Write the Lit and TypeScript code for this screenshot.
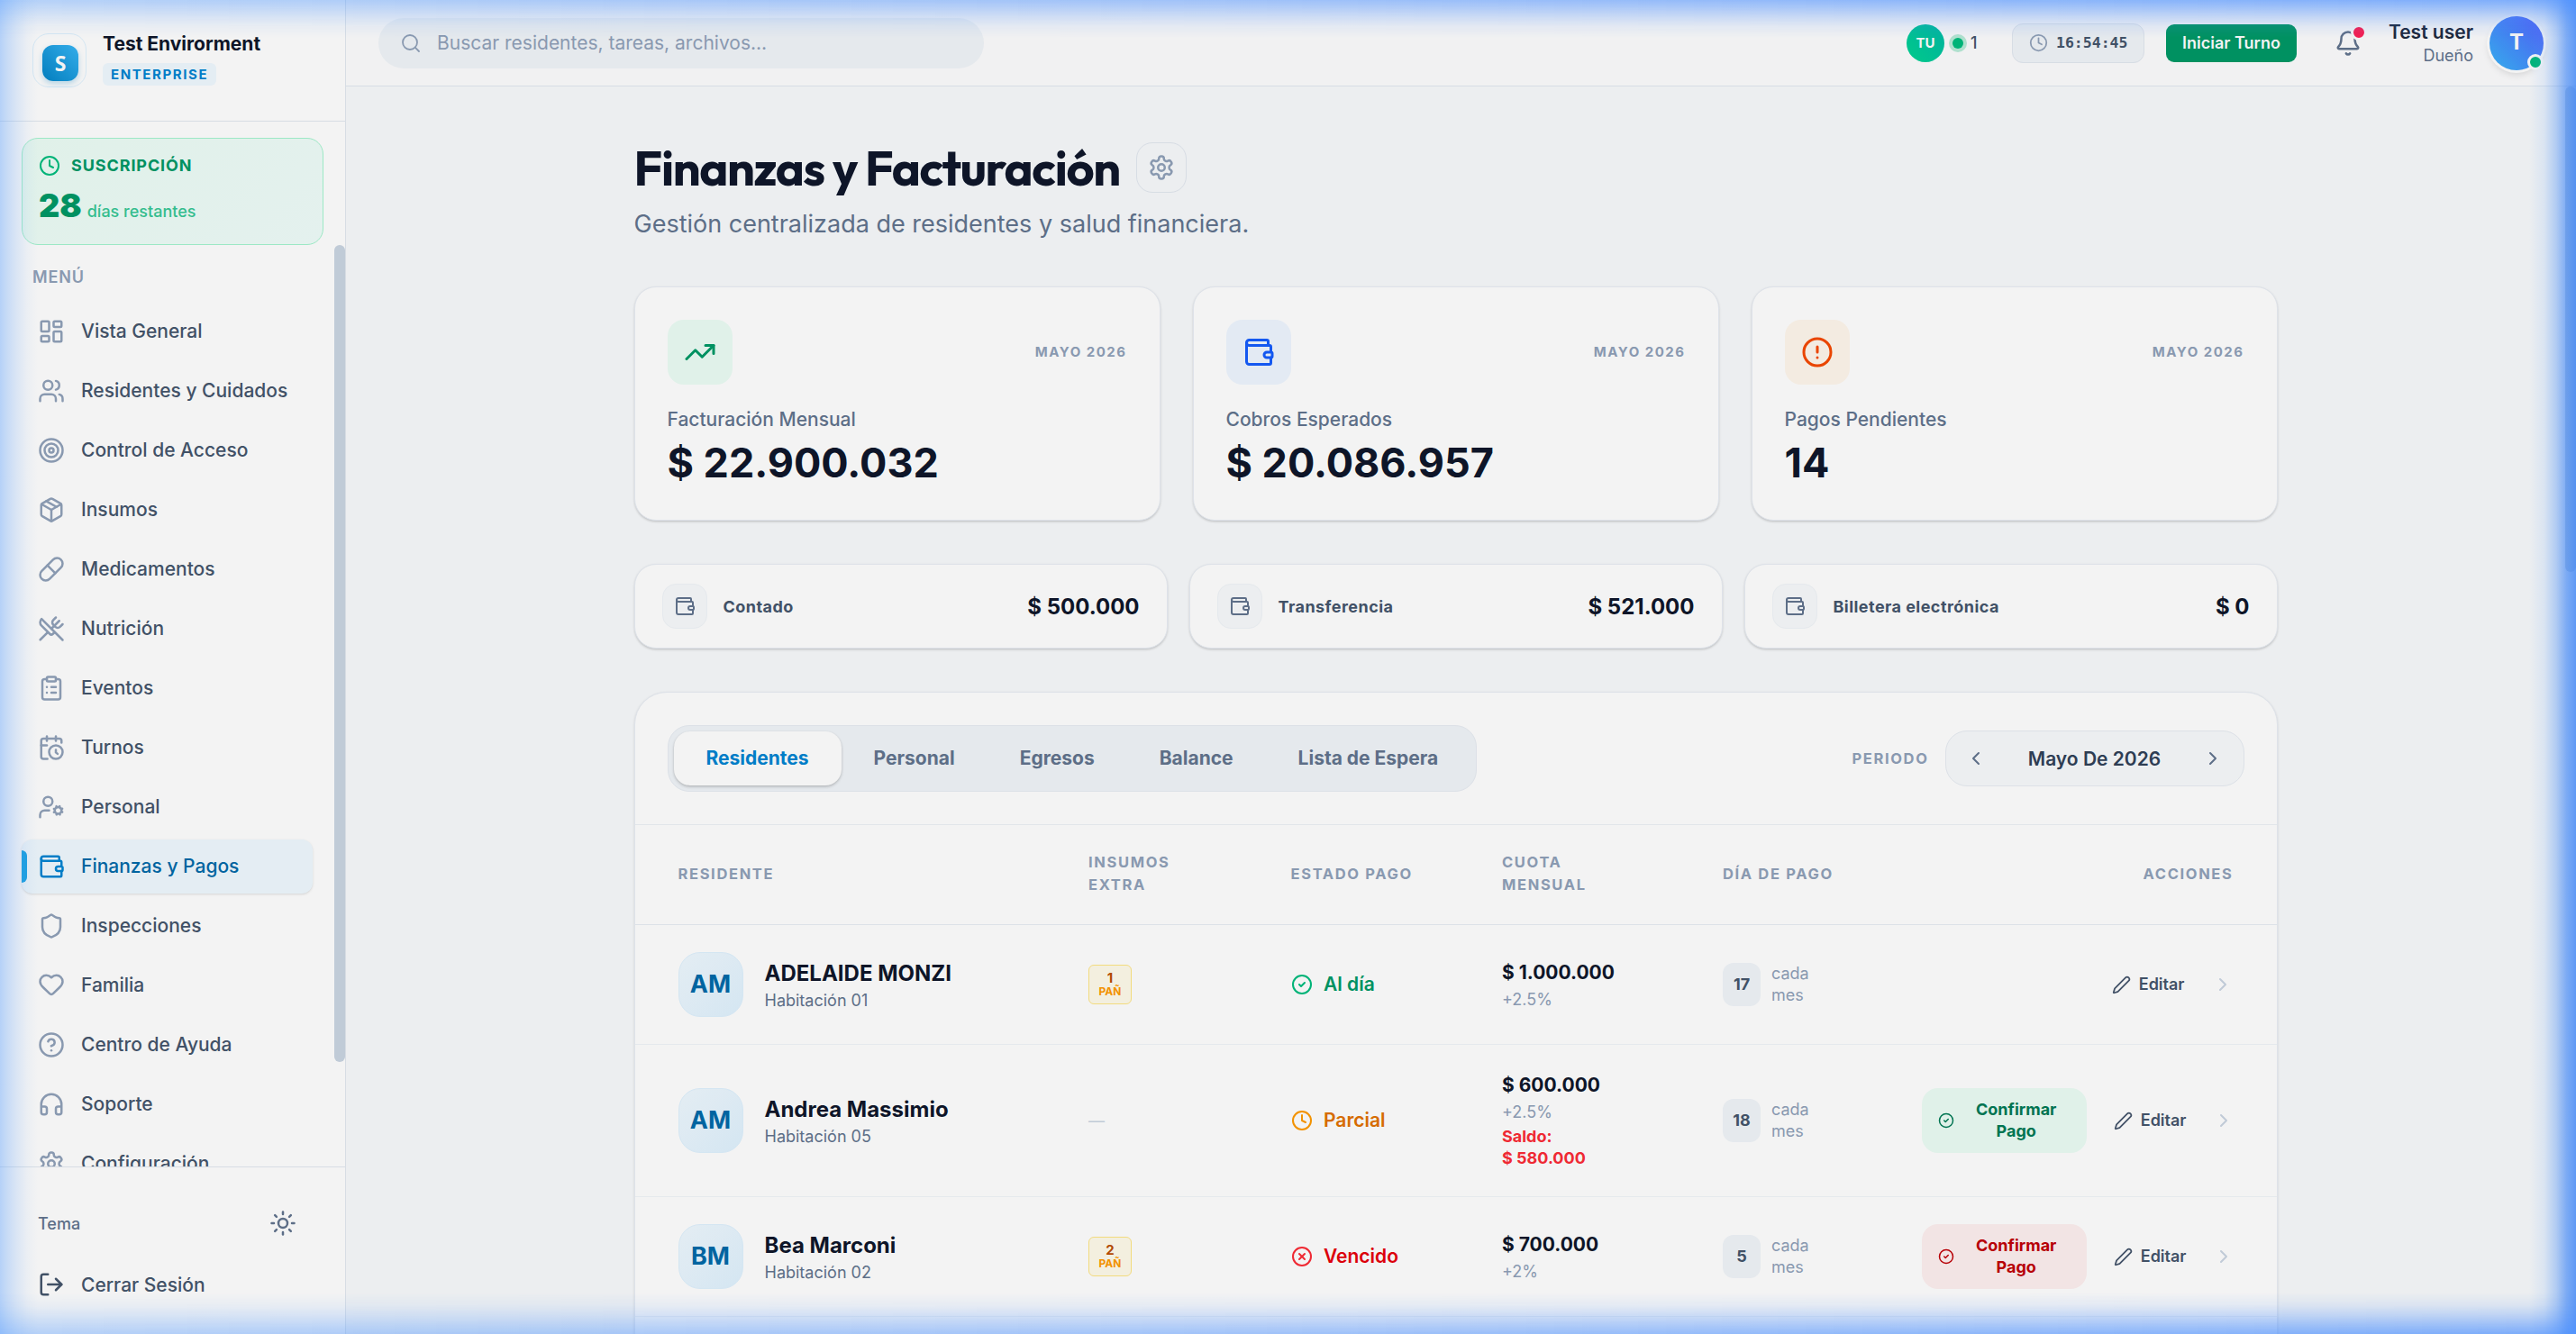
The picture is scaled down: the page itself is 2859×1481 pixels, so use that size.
import { LitElement, html, css, svg, nothing } from "lit";
import { customElement, property } from "lit/decorators.js";
import { classMap } from "lit/directives/class-map.js";

const ICONS: Record<string, unknown> = {
  search: svg`<circle cx="11" cy="11" r="8"/><path d="m21 21-4.3-4.3"/>`,
  clock: svg`<circle cx="12" cy="12" r="10"/><path d="M12 6v6l4 2"/>`,
  dashboard: svg`<rect width="7" height="9" x="3" y="3" rx="1"/><rect width="7" height="5" x="14" y="3" rx="1"/><rect width="7" height="9" x="14" y="12" rx="1"/><rect width="7" height="5" x="3" y="16" rx="1"/>`,
  users: svg`<path d="M16 21v-2a4 4 0 0 0-4-4H6a4 4 0 0 0-4 4v2"/><circle cx="9" cy="7" r="4"/><path d="M22 21v-2a4 4 0 0 0-3-3.87"/><path d="M16 3.13a4 4 0 0 1 0 7.75"/>`,
  target: svg`<circle cx="12" cy="12" r="10"/><circle cx="12" cy="12" r="6"/><circle cx="12" cy="12" r="2"/>`,
  package: svg`<path d="M11 21.73a2 2 0 0 0 2 0l7-4A2 2 0 0 0 21 16V8a2 2 0 0 0-1-1.73l-7-4a2 2 0 0 0-2 0l-7 4A2 2 0 0 0 3 8v8a2 2 0 0 0 1 1.73z"/><path d="M12 22V12"/><path d="m3.3 7 8.7 5 8.7-5"/><path d="m7.5 4.27 9 5.15"/>`,
  pill: svg`<path d="m10.5 20.5 10-10a4.95 4.95 0 1 0-7-7l-10 10a4.95 4.95 0 1 0 7 7Z"/><path d="m8.5 8.5 7 7"/>`,
  utensils: svg`<path d="m16 2-2.3 2.3a3 3 0 0 0 0 4.2l1.8 1.8a3 3 0 0 0 4.2 0L22 8"/><path d="M15 15 3.3 3.3a4.2 4.2 0 0 0 0 6l7.3 7.3c.7.7 2 .7 2.8 0L15 15Zm0 0 7 7"/><path d="m2.1 21.8 6.4-6.3"/><path d="m19 5-7 7"/>`,
  clipboard: svg`<rect width="8" height="4" x="8" y="2" rx="1"/><path d="M16 4h2a2 2 0 0 1 2 2v14a2 2 0 0 1-2 2H6a2 2 0 0 1-2-2V6a2 2 0 0 1 2-2h2"/><path d="M12 11h4"/><path d="M12 16h4"/><path d="M8 11h.01"/><path d="M8 16h.01"/>`,
  calendarClock: svg`<path d="M21 7.5V6a2 2 0 0 0-2-2H5a2 2 0 0 0-2 2v14a2 2 0 0 0 2 2h3.5"/><path d="M16 2v4"/><path d="M8 2v4"/><path d="M3 10h5"/><path d="M17.5 17.5 16 16.3V14"/><circle cx="16" cy="16" r="6"/>`,
  userCog: svg`<circle cx="9" cy="7" r="4"/><path d="M10 15H6a4 4 0 0 0-4 4v2"/><circle cx="18" cy="15" r="3"/><path d="m21.7 16.4-.9-.3"/><path d="m15.2 13.9-.9-.3"/><path d="m16.6 18.7.3-.9"/><path d="m19.1 12.2.3-.9"/><path d="m19.6 18.7-.4-1"/><path d="m16.8 12.3-.4-1"/><path d="m14.3 16.6 1-.4"/><path d="m20.7 13.8 1-.4"/>`,
  wallet: svg`<path d="M19 7V4a1 1 0 0 0-1-1H5a2 2 0 0 0 0 4h15a1 1 0 0 1 1 1v4h-3a2 2 0 0 0 0 4h3a1 1 0 0 0 1-1v-2a1 1 0 0 0-1-1"/><path d="M3 5v14a2 2 0 0 0 2 2h15a1 1 0 0 0 1-1v-4"/>`,
  shield: svg`<path d="M20 13c0 5-3.5 7.5-7.66 8.95a1 1 0 0 1-.67-.01C7.5 20.5 4 18 4 13V6a1 1 0 0 1 1-1c2 0 4.5-1.2 6.24-2.72a1.17 1.17 0 0 1 1.52 0C14.51 3.81 17 5 19 5a1 1 0 0 1 1 1z"/>`,
  heart: svg`<path d="M19 14c1.49-1.46 3-3.21 3-5.5A5.5 5.5 0 0 0 16.5 3c-1.76 0-3 .5-4.5 2-1.5-1.5-2.74-2-4.5-2A5.5 5.5 0 0 0 2 8.5c0 2.3 1.5 4.05 3 5.5l5.5 5.3a2.1 2.1 0 0 0 3 0z"/>`,
  help: svg`<circle cx="12" cy="12" r="10"/><path d="M9.09 9a3 3 0 0 1 5.83 1c0 2-3 3-3 3"/><path d="M12 17h.01"/>`,
  headphones: svg`<path d="M3 14h3a2 2 0 0 1 2 2v3a2 2 0 0 1-2 2H5a2 2 0 0 1-2-2v-7a9 9 0 0 1 18 0v7a2 2 0 0 1-2 2h-1a2 2 0 0 1-2-2v-3a2 2 0 0 1 2-2h3"/>`,
  settings: svg`<path d="M12.22 2h-.44a2 2 0 0 0-2 2v.18a2 2 0 0 1-1 1.73l-.43.25a2 2 0 0 1-2 0l-.15-.08a2 2 0 0 0-2.73.73l-.22.38a2 2 0 0 0 .73 2.73l.15.1a2 2 0 0 1 1 1.72v.51a2 2 0 0 1-1 1.74l-.15.09a2 2 0 0 0-.73 2.73l.22.38a2 2 0 0 0 2.73.73l.15-.08a2 2 0 0 1 2 0l.43.25a2 2 0 0 1 1 1.73V20a2 2 0 0 0 2 2h.44a2 2 0 0 0 2-2v-.18a2 2 0 0 1 1-1.73l.43-.25a2 2 0 0 1 2 0l.15.08a2 2 0 0 0 2.73-.73l.22-.39a2 2 0 0 0-.73-2.73l-.15-.08a2 2 0 0 1-1-1.74v-.5a2 2 0 0 1 1-1.74l.15-.09a2 2 0 0 0 .73-2.73l-.22-.38a2 2 0 0 0-2.73-.73l-.15.08a2 2 0 0 1-2 0l-.43-.25a2 2 0 0 1-1-1.73V4a2 2 0 0 0-2-2z"/><circle cx="12" cy="12" r="3"/>`,
  sun: svg`<circle cx="12" cy="12" r="4"/><path d="M12 2v2"/><path d="M12 20v2"/><path d="m4.93 4.93 1.41 1.41"/><path d="m17.66 17.66 1.41 1.41"/><path d="M2 12h2"/><path d="M20 12h2"/><path d="m6.34 17.66-1.41 1.41"/><path d="m19.07 4.93-1.41 1.41"/>`,
  logout: svg`<path d="M9 21H5a2 2 0 0 1-2-2V5a2 2 0 0 1 2-2h4"/><path d="m16 17 5-5-5-5"/><path d="M21 12H9"/>`,
  bell: svg`<path d="M10.268 21a2 2 0 0 0 3.464 0"/><path d="M3.262 15.326A1 1 0 0 0 4 17h16a1 1 0 0 0 .74-1.673C19.41 13.956 18 12.499 18 8A6 6 0 0 0 6 8c0 4.499-1.411 5.956-2.738 7.326"/>`,
  trending: svg`<path d="m22 7-8.5 8.5-5-5L2 17"/><path d="M16 7h6v6"/>`,
  alert: svg`<circle cx="12" cy="12" r="10"/><path d="M12 8v4"/><path d="M12 16h.01"/>`,
  left: svg`<path d="m15 18-6-6 6-6"/>`,
  right: svg`<path d="m9 18 6-6-6-6"/>`,
  check: svg`<circle cx="12" cy="12" r="10"/><path d="m9 12 2 2 4-4"/>`,
  cross: svg`<circle cx="12" cy="12" r="10"/><path d="m15 9-6 6"/><path d="m9 9 6 6"/>`,
  pencil: svg`<path d="M21.174 6.812a1 1 0 0 0-3.986-3.987L3.842 16.174a2 2 0 0 0-.5.83l-1.321 4.352a.5.5 0 0 0 .623.622l4.353-1.32a2 2 0 0 0 .83-.497z"/>`,
};

const icon = (name: string, size: number, stroke = 2) => html`<svg
  class="icon" width=${size} height=${size} viewBox="0 0 24 24" fill="none" stroke="currentColor"
  stroke-width=${stroke} stroke-linecap="round" stroke-linejoin="round">${ICONS[name]}</svg>`;

const base = css`
  * { box-sizing: border-box; }
  .icon { display: block; flex: none; }
`;

const NAV: [string, string][] = [
  ["dashboard", "Vista General"],
  ["users", "Residentes y Cuidados"],
  ["target", "Control de Acceso"],
  ["package", "Insumos"],
  ["pill", "Medicamentos"],
  ["utensils", "Nutrición"],
  ["clipboard", "Eventos"],
  ["calendarClock", "Turnos"],
  ["userCog", "Personal"],
  ["wallet", "Finanzas y Pagos"],
  ["shield", "Inspecciones"],
  ["heart", "Familia"],
  ["help", "Centro de Ayuda"],
  ["headphones", "Soporte"],
  ["settings", "Configuración"],
];

@customElement("app-sidebar")
class AppSidebar extends LitElement {
  @property() active = "Finanzas y Pagos";

  static styles = [base, css`
    :host { display: flex; flex-direction: column; width: 384px; height: 100%; flex: none; background: #fff; border-right: 1px solid #e2e8f0; }
    .brand { display: flex; height: 135px; padding: 0 36px; align-items: center; border-bottom: 1px solid #e2e8f0; gap: 18px; }
    .logo { width: 60px; height: 60px; border: 1px solid #dff2fe; border-radius: 18px; padding: 12px 8px 6px 10px; background: #fff; }
    .mark { width: 40px; height: 40px; border-radius: 12px; background: linear-gradient(45deg, #0284c7, #38b6f6); box-shadow: 0 3px 6px rgba(2, 132, 199, .25); color: #fff; font: 700 23px/41px "Noto Sans", "Open Sans", sans-serif; text-align: center; }
    .name { font-size: 21px; line-height: 26px; font-weight: 700; color: #0f172b; white-space: nowrap; }
    .plan { display: inline-block; margin-top: 8px; margin-bottom: 2px; padding: 0 9px; height: 25px; font-size: 15px; line-height: 25px; font-weight: 700; letter-spacing: 1.6px; color: #0084d1; background: #f0f9ff; border-radius: 6px; }
    .brand-text { display: flex; flex-direction: column; align-items: flex-start; margin-bottom: 2px; }
    .scroller { flex: 1; min-height: 0; overflow: hidden; display: flex; }
    .list { flex: 1; padding: 18px 0 0 24px; }
    .track { width: 12px; padding-top: 137px; }
    .thumb { height: 907px; border-radius: 6px; background: #cad5e2; }
    .sub { width: 335px; height: 119px; border: 1px solid #a4f4cf; border-radius: 18px; padding: 18px 18px; background: linear-gradient(135deg, #ecfdf5, #f0fdfa); }
    .sub-head { display: flex; align-items: center; gap: 12px; height: 24px; font-size: 18px; line-height: 24px; font-weight: 700; letter-spacing: .9px; color: #009966; }
    .sub-head svg { color: #00bc7d; }
    .sub-body { display: flex; align-items: baseline; gap: 6px; margin-top: 9px; line-height: 54px; color: #009966; }
    .sub-num { font-size: 36px; font-weight: 900; line-height: 46px; }
    .sub-days { font-size: 18px; line-height: 24px; font-weight: 500; color: #37c795; }
    .menu { margin: 24px 0 0 12px; height: 24px; font-size: 18px; line-height: 24px; font-weight: 600; letter-spacing: .9px; color: #90a1b9; }
    .nav { display: flex; flex-direction: column; gap: 6px; margin-top: 18px; }
    .item { display: flex; align-items: center; gap: 18px; width: 323px; height: 60px; padding-left: 18px; border-radius: 12px; font-size: 21px; line-height: 30px; font-weight: 500; color: #45556c; flex: none; white-space: nowrap; }
    .item svg { color: #90a1b9; }
    .item.active { background: #f0f9ff; color: #0069a8; box-shadow: 0 1px 3px rgba(0, 0, 0, .1), 0 1px 2px -1px rgba(0, 0, 0, .1); padding-left: 0; }
    .item.active svg { color: #0084d1; }
    .item .bar { width: 6px; height: 36px; margin: 0 -6px 0 0; border-radius: 0 6px 6px 0; background: #1ea7ea; }
    .foot { height: 186px; border-top: 1px solid #e2e8f0; padding: 32px 24px 0; }
    .theme { display: flex; align-items: center; justify-content: space-between; height: 60px; padding: 0 30px 0 18px; font-size: 18px; font-weight: 500; color: #62748e; }
    .exit { display: flex; align-items: center; gap: 18px; height: 60px; margin-top: 8px; padding-left: 18px; font-size: 21px; font-weight: 500; color: #45556c; }
  `];

  render() {
    return html`
      <div class="brand">
        <div class="logo"><div class="mark">S</div></div>
        <div class="brand-text"><span class="name">Test Envirorment</span><span class="plan">ENTERPRISE</span></div>
      </div>
      <div class="scroller">
        <div class="list">
          <div class="sub">
            <div class="sub-head">${icon("clock", 24)}<span>SUSCRIPCIÓN</span></div>
            <div class="sub-body"><span class="sub-num">28</span><span class="sub-days">días restantes</span></div>
          </div>
          <div class="menu">MENÚ</div>
          <nav class="nav">
            ${NAV.map(([ic, label]) => {
              const active = label === this.active;
              return html`<a class=${classMap({ item: true, active })}>
                ${active ? html`<span class="bar"></span>` : nothing}${icon(ic, 30)}<span>${label}</span></a>`;
            })}
          </nav>
        </div>
        <div class="track"><div class="thumb"></div></div>
      </div>
      <div class="foot">
        <div class="theme"><span>Tema</span>${icon("sun", 30)}</div>
        <div class="exit">${icon("logout", 30)}<span>Cerrar Sesión</span></div>
      </div>`;
  }
}

@customElement("app-topbar")
class AppTopbar extends LitElement {
  static styles = [base, css`
    :host { display: flex; align-items: center; height: 96px; padding: 0 36px; background: #fdfdfe; border-bottom: 1px solid #e2e8f0; flex: none; }
    .search { display: flex; align-items: center; gap: 17px; width: 672px; height: 56px; padding-left: 24px; border-radius: 28px; background: #f1f5f9; color: #90a1b9; font-size: 21px; }
    .grow { flex: 1; }
    .tu { width: 42px; height: 42px; border-radius: 50%; background: linear-gradient(45deg, #00d492, #00bba7); color: #fff; font-size: 15px; font-weight: 700; line-height: 41px; text-align: center; }
    .halo { width: 20px; height: 20px; margin-left: 5px; border-radius: 50%; background: #b9ecd9; display: grid; place-items: center; }
    .dot { width: 12px; height: 12px; border-radius: 50%; background: #00bc7d; }
    .count { margin-left: 4px; width: 46px; font-size: 18px; font-weight: 500; color: #45556c; }
    .clock { display: flex; align-items: center; gap: 9px; width: 147px; height: 44px; padding-left: 18px; border: 1px solid #e2e8f0; border-radius: 12px; background: #f1f5f9; color: #45556c; font: 700 16.5px/24px "DejaVu Sans Mono", monospace; }
    .clock svg { color: #90a1b9; }
    .start { width: 145px; height: 42px; margin-left: 24px; border-radius: 9px; background: #009966; color: #fff; font-size: 18px; font-weight: 600; line-height: 42px; text-align: center; white-space: nowrap; }
    .bell { position: relative; margin-left: 42px; color: #62748e; }
    .alert { position: absolute; left: 18px; top: -6px; width: 18px; height: 18px; border: 3px solid #fdfdfe; border-radius: 50%; background: #ff2056; }
    .user { margin-left: 30px; text-align: right; }
    .user-name { font-size: 21px; line-height: 28px; font-weight: 600; color: #1d293d; }
    .role { font-size: 18px; line-height: 24px; color: #62748e; }
    .avatar { position: relative; width: 60px; height: 60px; margin-left: 18px; border-radius: 50%; background: linear-gradient(45deg, #37b5f8, #5560ff); box-shadow: 0 0 0 3px #fff, 0 4px 8px rgba(0, 0, 0, .15); color: #fff; font-size: 24px; font-weight: 700; line-height: 58px; text-align: center; }
    .online { position: absolute; left: 42px; top: 42px; width: 18px; height: 18px; border: 3px solid #fff; border-radius: 50%; background: #00bc7d; }
  `];

  render() {
    return html`
      <div class="search">${icon("search", 24, 1.8)}<span>Buscar residentes, tareas, archivos...</span></div>
      <div class="grow"></div>
      <div class="tu">TU</div><div class="halo"><div class="dot"></div></div><div class="count">1</div>
      <div class="clock">${icon("clock", 21)}<span>16:54:45</span></div>
      <div class="start">Iniciar Turno</div>
      <div class="bell">${icon("bell", 30)}<div class="alert"></div></div>
      <div class="user"><div class="user-name">Test user</div><div class="role">Dueño</div></div>
      <div class="avatar">T<div class="online"></div></div>`;
  }
}

interface Resident {
  initials: string;
  name: string;
  room: string;
  extras?: string;
  status: "ok" | "partial" | "late";
  fee: string;
  rate: string;
  balance?: string;
  day: string;
}

const RESIDENTS: Resident[] = [
  { initials: "AM", name: "ADELAIDE MONZI", room: "Habitación 01", extras: "1", status: "ok", fee: "$ 1.000.000", rate: "+2.5%", day: "17" },
  { initials: "AM", name: "Andrea Massimio", room: "Habitación 05", status: "partial", fee: "$ 600.000", rate: "+2.5%", balance: "$ 580.000", day: "18" },
  { initials: "BM", name: "Bea Marconi", room: "Habitación 02", extras: "2", status: "late", fee: "$ 700.000", rate: "+2%", day: "5" },
];

const STATUS = {
  ok: { icon: "check", label: "Al día" },
  partial: { icon: "clock", label: "Parcial" },
  late: { icon: "cross", label: "Vencido" },
};

@customElement("residents-table")
class ResidentsTable extends LitElement {
  static styles = [base, css`
    :host { display: block; }
    .row { display: grid; grid-template-columns: 455.5px 224.5px 234.5px 245px 1fr; align-items: center; padding: 30px 48px; border-bottom: 1px solid #f1f5f9; }
    .head { border-bottom-color: #e7edf4; height: 111px; padding: 29px 48px 31px; font-size: 16.5px; line-height: 24.75px; font-weight: 700; letter-spacing: 1.65px; color: #90a1b9; }
    .head-last { display: flex; justify-content: space-between; }
    .person { display: flex; align-items: center; gap: 24px; }
    .avatar { width: 72px; height: 72px; border: 1px solid #dff2fe; border-radius: 24px; background: linear-gradient(135deg, #f0f9ff, #dff2fe); color: #0069a8; font-size: 27px; line-height: 70px; font-weight: 700; text-align: center; }
    .name { font-size: 24px; line-height: 36px; font-weight: 700; color: #0f172b; white-space: nowrap; }
    .room { font-size: 18px; line-height: 24px; color: #62748e; }
    .extra { width: 48px; height: 44px; border: 1px solid #fee685; border-radius: 6px; background: #fffbeb; text-align: center; font-size: 15px; line-height: 15px; font-weight: 700; color: #bb4d00; padding-top: 6px; }
    .unit { font-size: 12px; line-height: 15px; color: #fe9a00; }
    .none { font-size: 18px; color: #cad5e2; }
    .status { display: flex; align-items: center; gap: 12.5px; font-size: 21px; line-height: 30px; font-weight: 600; }
    .ok { color: #009966; } .ok svg { color: #00bc7d; }
    .partial { color: #e17100; } .partial svg { color: #fe9a00; }
    .late { color: #e7000b; } .late svg { color: #fb2c36; }
    .fee { font-size: 21px; line-height: 30px; font-weight: 700; color: #0f172b; }
    .rate, .balance { margin-top: 3px; font-size: 18px; line-height: 24px; color: #90a1b9; }
    .balance { color: #fb2c36; font-weight: 700; }
    .last { display: flex; align-items: center; justify-content: space-between; }
    .day { display: flex; align-items: center; gap: 12px; font-size: 18px; line-height: 24px; color: #90a1b9; }
    .num { width: 42px; height: 48px; border-radius: 12px; background: #f1f5f9; color: #45556c; font-weight: 700; line-height: 48px; text-align: center; }
    .acts { display: flex; align-items: center; }
    .confirm { display: flex; align-items: center; gap: 9px; width: 183px; height: 72px; margin-right: 30px; padding: 0 18px; border-radius: 18px; font-size: 18px; line-height: 24px; font-weight: 700; background: #ecfdf5; color: #007a55; }
    .confirm span { flex: 1; text-align: center; }
    .confirm.red { background: #fef0f0; color: #c10007; }
    .edit { display: flex; align-items: center; gap: 9px; margin-right: 30px; font-size: 18px; line-height: 24px; font-weight: 600; color: #45556c; }
    .go { color: #cad5e2; }
    .tight .edit { margin-right: 29px; }
    .tight .go { margin-right: -1px; }
  `];

  render() {
    return html`
      <div class="row head">
        <div>RESIDENTE</div><div>INSUMOS<br>EXTRA</div><div>ESTADO PAGO</div><div>CUOTA<br>MENSUAL</div>
        <div class="head-last"><span>DÍA DE PAGO</span><span>ACCIONES</span></div>
      </div>
      ${RESIDENTS.map((r) => html`
        <div class="row">
          <div class="person"><div class="avatar">${r.initials}</div>
            <div><div class="name">${r.name}</div><div class="room">${r.room}</div></div></div>
          <div>${r.extras ? html`<div class="extra">${r.extras}<div class="unit">PAÑ</div></div>` : html`<span class="none">—</span>`}</div>
          <div class="status ${r.status}">${icon(STATUS[r.status].icon, 24)}<span>${STATUS[r.status].label}</span></div>
          <div><div class="fee">${r.fee}</div><div class="rate">${r.rate}</div>
            ${r.balance ? html`<div class="balance">Saldo:<br>${r.balance}</div>` : nothing}</div>
          <div class="last">
            <div class="day"><div class="num">${r.day}</div><div>cada<br>mes</div></div>
            <div class=${classMap({ acts: true, tight: r.status !== "ok" })}>
              ${r.status === "ok" ? nothing : html`<div class=${classMap({ confirm: true, red: r.status === "late" })}>${icon("check", 18)}<span>Confirmar<br>Pago</span></div>`}
              <div class="edit">${icon("pencil", 21)}<span>Editar</span></div>
              <div class="go">${icon("right", 24)}</div>
            </div>
          </div>
        </div>`)}`;
  }
}

@customElement("app-root")
class AppRoot extends LitElement {
  static styles = [base, css`
    :host { display: block; position: relative; width: 100%; height: 1481px; overflow: hidden; font-family: Inter, "Liberation Sans", sans-serif; color: #0f172b; }
    .shell { display: flex; height: 100%; background: #f8fafc; }
    .page { flex: 1; min-width: 0; display: flex; flex-direction: column; }
    .body { flex: 1; min-height: 0; display: flex; overflow: hidden; }
    .center { flex: 1; display: flex; flex-direction: column; align-items: center; }
    .content { width: 1824px; padding-top: 62px; }
    .track { width: 12px; flex: none; }
    .thumb { height: 539px; border-radius: 6px; background: #cad5e2; }
    .title { display: flex; align-items: center; gap: 18px; height: 56px; }
    h1 { margin: 0; font: 700 54px/60px Outfit, Lato, sans-serif; letter-spacing: -1.35px; color: #0f172b; white-space: nowrap; width: 539px; }
    .gear { width: 56px; height: 56px; border: 1px solid #e2e8f0; border-radius: 18px; display: grid; place-items: center; color: #90a1b9; }
    .lead { margin-top: 14px; font-size: 27px; line-height: 42px; color: #62748e; }
    .cards { display: grid; grid-template-columns: repeat(3, 1fr); gap: 36px; margin-top: 48px; }
    .card { height: 260px; padding: 36px; border: 1px solid #e9eef5; border-radius: 24px; background: #fff; box-shadow: 0 1px 3px rgba(0, 0, 0, .1), 0 2px 3px -1px rgba(0, 0, 0, .12); }
    .top { display: flex; justify-content: space-between; align-items: center; }
    .tile { width: 72px; height: 72px; border-radius: 18px; display: grid; place-items: center; }
    .green { background: #ecfdf5; color: #009966; }
    .blue { background: #eff6ff; color: #155dfc; }
    .orange { background: #fff7ed; color: #f54900; }
    .month { margin-top: -2px; font-size: 15px; font-weight: 700; letter-spacing: 1.5px; color: #90a1b9; }
    .label { margin-top: 24px; font-size: 21px; line-height: 30px; color: #62748e; font-weight: 500; }
    .value { margin-top: 6px; font-size: 45px; line-height: 54px; font-weight: 700; color: #0f172b; }
    .methods { display: grid; grid-template-columns: repeat(3, 1fr); gap: 24px; margin-top: 48px; }
    .method { display: flex; align-items: center; gap: 18px; height: 94px; padding: 0 30px; border: 1px solid #e9eef5; border-radius: 24px; background: #fff; box-shadow: 0 1px 3px rgba(0, 0, 0, .1), 0 2px 3px -1px rgba(0, 0, 0, .12); font-size: 18px; font-weight: 700; color: #45556c; letter-spacing: .45px; }
    .mini { width: 50px; height: 50px; border: 1px solid #f1f5f9; border-radius: 15px; background: #f8fafc; display: grid; place-items: center; color: #62748e; }
    .amount { margin-left: auto; font-size: 24px; font-weight: 700; color: #0f172b; letter-spacing: 0; }
    .panel { margin-top: 48px; border: 1px solid #e9eef5; border-radius: 36px; background: #fff; box-shadow: 0 1px 3px rgba(0, 0, 0, .12); height: 900px; }
    .tools { display: flex; align-items: center; justify-content: space-between; height: 147px; padding: 0 36px; border-bottom: 1px solid #edf1f6; }
    .tabs { display: flex; height: 74px; padding: 6px; border: 1px solid #e8edf3; border-radius: 24px; background: #f1f5f9; }
    .tab { padding: 0 36px; border-radius: 18px; font-size: 21px; line-height: 60px; font-weight: 700; color: #62748e; }
    .tab.on { background: #fff; color: #0084d1; box-shadow: 0 1px 3px rgba(0, 0, 0, .15), 0 2px 4px -1px rgba(0, 0, 0, .15); }
    .period { display: flex; align-items: center; gap: 18px; font-size: 16.5px; font-weight: 700; letter-spacing: 1.65px; color: #90a1b9; }
    .picker { display: flex; align-items: center; justify-content: space-between; width: 332px; height: 62px; padding: 0 21px; border: 1px solid #e8edf3; border-radius: 24px; background: #f8fafc; font-size: 21px; font-weight: 600; letter-spacing: 0; color: #314158; }
    .picker svg { color: #62748e; }
    .veil, .glow { position: absolute; inset: 0; pointer-events: none; }
    .veil { background: rgba(0, 0, 0, .047); }
    .g-top { bottom: auto; height: 42px; background: linear-gradient(90deg, rgba(88, 158, 255, .4), rgba(82, 148, 255, .52) 50%, rgba(76, 144, 255, .7)); }
    .g-bottom { top: auto; height: 46px; background: linear-gradient(90deg, rgba(88, 158, 255, .4), rgba(82, 148, 255, .52) 50%, rgba(76, 144, 255, .7)); }
    .g-top { -webkit-mask-image: linear-gradient(180deg, #000, rgba(0, 0, 0, .75) 20%, rgba(0, 0, 0, .42) 45%, rgba(0, 0, 0, .15) 70%, transparent); }
    .g-bottom { -webkit-mask-image: linear-gradient(0deg, #000, rgba(0, 0, 0, .75) 20%, rgba(0, 0, 0, .42) 45%, rgba(0, 0, 0, .15) 70%, transparent); }
    .g-left { right: auto; width: 42px; background: linear-gradient(90deg, rgba(88, 158, 255, .4), rgba(88, 158, 255, .28) 20%, rgba(88, 158, 255, .17) 42%, rgba(88, 158, 255, .05) 72%, transparent); }
    .g-right { left: auto; width: 52px; background: linear-gradient(270deg, rgba(60, 132, 246, .8), rgba(60, 132, 246, .64) 20%, rgba(70, 140, 246, .36) 42%, rgba(88, 158, 255, .12) 68%, transparent); }
  `];

  private kpi(ic: string, tone: string, label: string, value: string) {
    return html`<div class="card">
      <div class="top"><div class="tile ${tone}">${icon(ic, 36)}</div><span class="month">MAYO 2026</span></div>
      <div class="label">${label}</div><div class="value">${value}</div></div>`;
  }

  private method(label: string, amount: string) {
    return html`<div class="method"><div class="mini">${icon("wallet", 24)}</div><span>${label}</span><span class="amount">${amount}</span></div>`;
  }

  render() {
    return html`
      <div class="shell">
        <app-sidebar></app-sidebar>
        <div class="page">
          <app-topbar></app-topbar>
          <div class="body">
            <div class="center"><div class="content">
              <div class="title"><h1>Finanzas y Facturación</h1><div class="gear">${icon("settings", 30)}</div></div>
              <div class="lead">Gestión centralizada de residentes y salud financiera.</div>
              <div class="cards">
                ${this.kpi("trending", "green", "Facturación Mensual", "$ 22.900.032")}
                ${this.kpi("wallet", "blue", "Cobros Esperados", "$ 20.086.957")}
                ${this.kpi("alert", "orange", "Pagos Pendientes", "14")}
              </div>
              <div class="methods">
                ${this.method("Contado", "$ 500.000")}
                ${this.method("Transferencia", "$ 521.000")}
                ${this.method("Billetera electrónica", "$ 0")}
              </div>
              <section class="panel">
                <div class="tools">
                  <div class="tabs">
                    ${["Residentes", "Personal", "Egresos", "Balance", "Lista de Espera"].map((t, i) => html`<div class=${classMap({ tab: true, on: i === 0 })}>${t}</div>`)}
                  </div>
                  <div class="period"><span>PERIODO</span><div class="picker">${icon("left", 24)}<span>Mayo De 2026</span>${icon("right", 24)}</div></div>
                </div>
                <residents-table></residents-table>
              </section>
            </div></div>
            <div class="track"><div class="thumb"></div></div>
          </div>
        </div>
      </div>
      <div class="veil"></div>
      <div class="glow g-left"></div><div class="glow g-right"></div>
      <div class="glow g-top"></div><div class="glow g-bottom"></div>`;
  }
}
